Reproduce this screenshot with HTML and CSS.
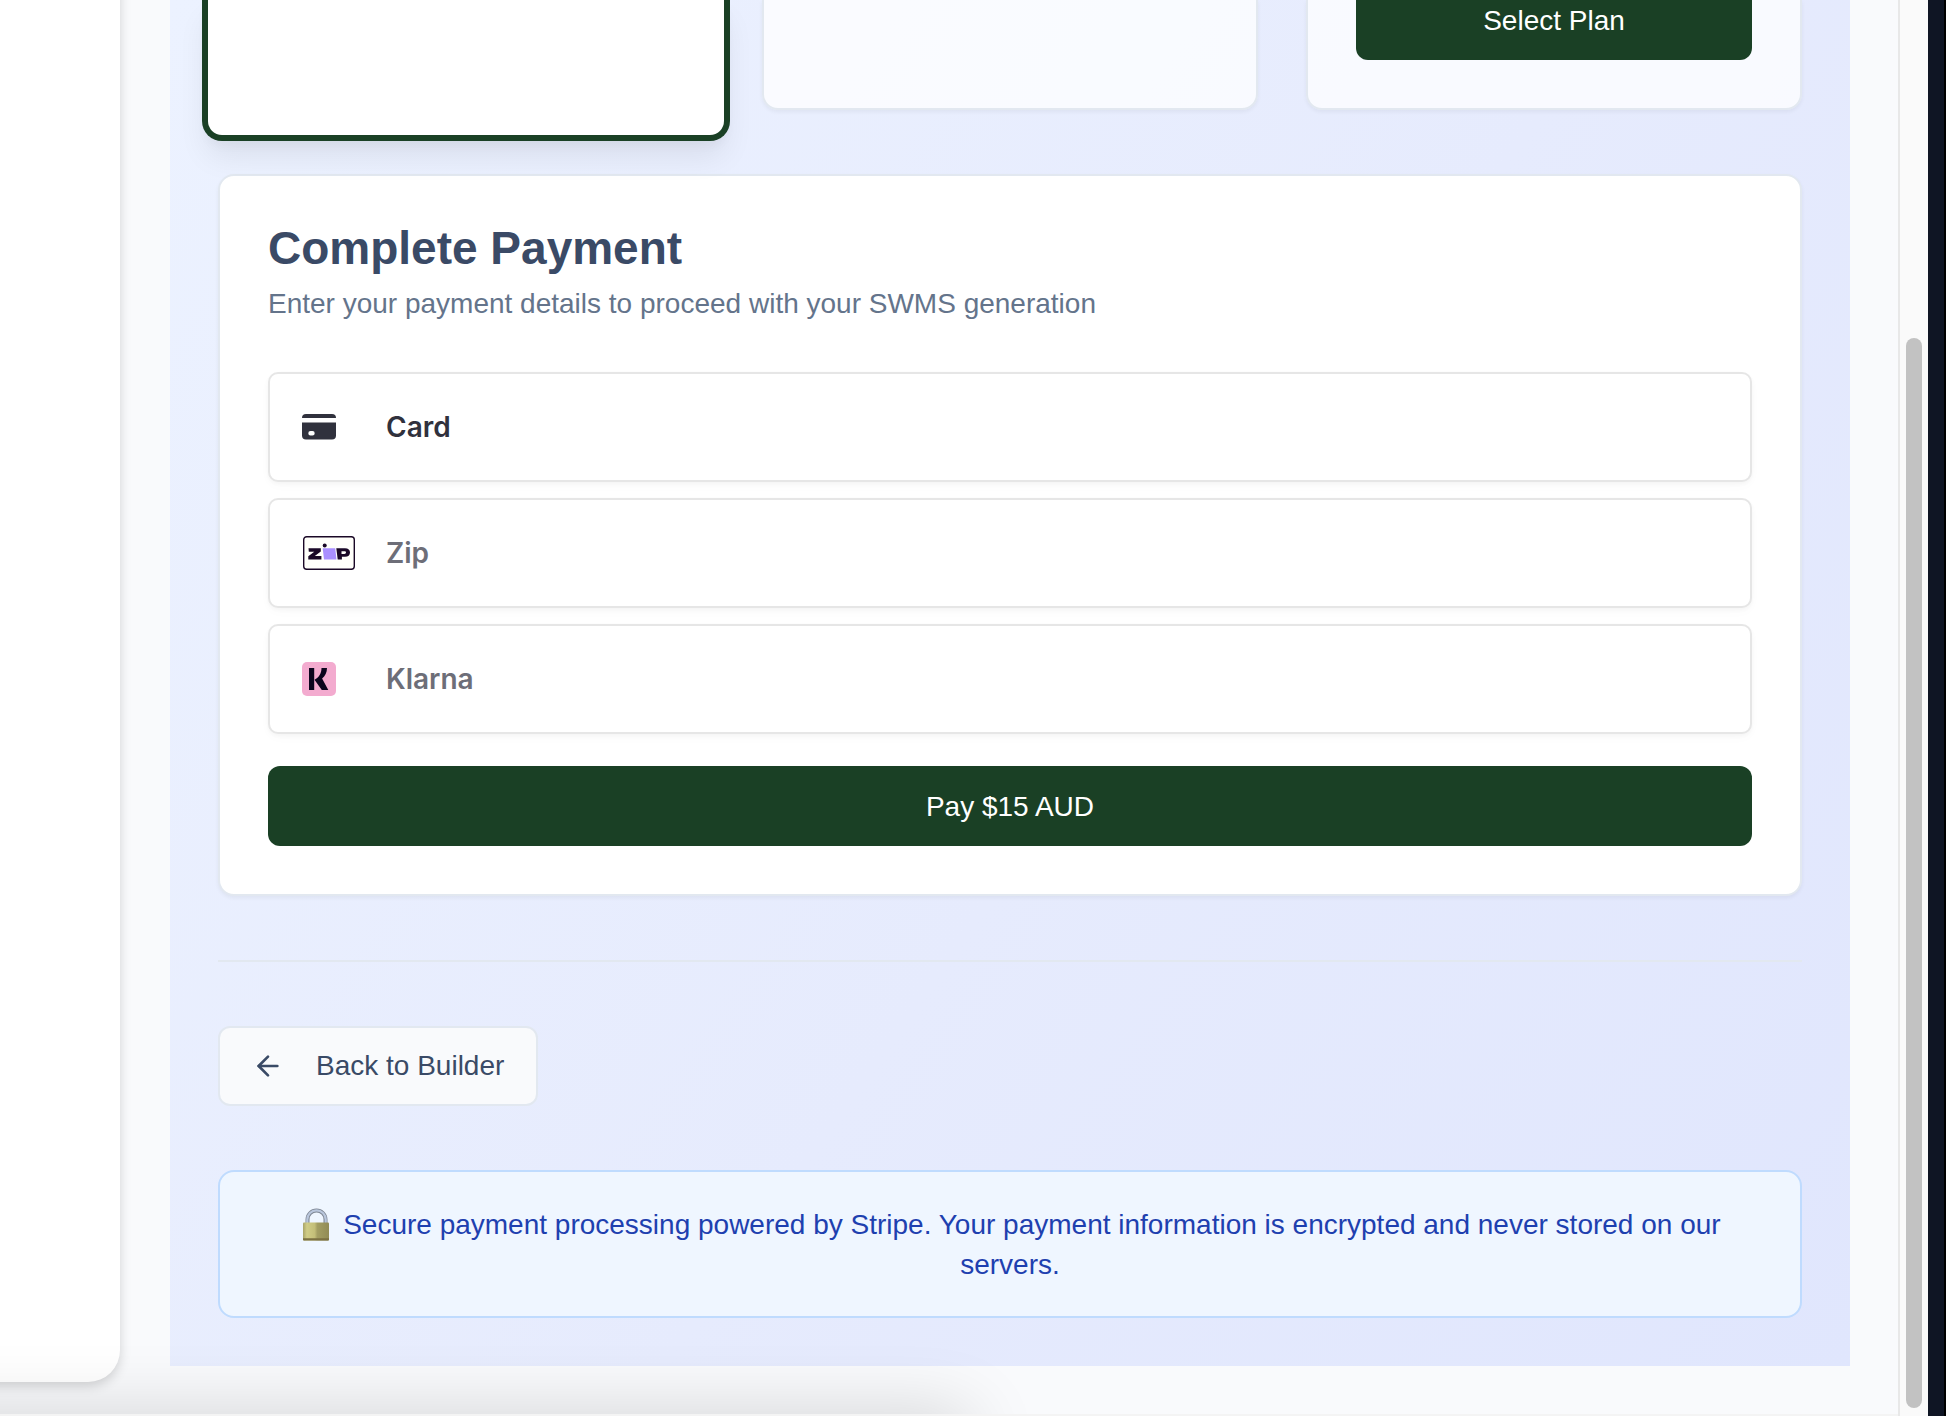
FILE: index.html
```html
<!DOCTYPE html>
<html lang="en">
<head>
<meta charset="utf-8">
<title>Complete Payment</title>
<meta name="viewport" content="width=device-width, initial-scale=1">
<link rel="stylesheet" href="styles.css">
</head>
<body>
<div class="page">
  <div class="content">
    <aside class="side-card"></aside>
    <main class="panel">
      <section class="plans">
        <article class="plan plan-selected"></article>
        <article class="plan"></article>
        <article class="plan"><button class="btn btn-plan" type="button">Select Plan</button></article>
      </section>

      <section class="payment">
        <h2 class="payment-title">Complete Payment</h2>
        <p class="payment-text">Enter your payment details to proceed with your SWMS generation</p>
        <div class="methods">
          <button class="method method-active" type="button">
            <span class="method-icon">
              <svg width="34" height="26" viewBox="0 0 34 26" fill="#30313d" aria-hidden="true">
                <path d="M4 0h26a4 4 0 0 1 4 4H0a4 4 0 0 1 4-4z"/>
                <path fill-rule="evenodd" d="M0 8.500h34V21.500a4 4 0 0 1-4 4H4a4 4 0 0 1-4-4zM8.500 17a2.200 2.200 0 0 0 0 4.400h2a2.200 2.200 0 0 0 0-4.400z"/>
              </svg>
            </span>
            <span>Card</span>
          </button>
          <button class="method" type="button">
            <span class="method-icon">
              <svg width="54" height="34" viewBox="0 0 54 34" aria-hidden="true">
                <rect x="1.700" y=".7" width="50.600" height="32.600" rx="3" fill="#fffffa" stroke="#1a0826" stroke-width="1.400"/>
                <path fill="#aa8fff" d="M20.700 12.300h12.500l1.300 11.200H22z"/>
                <circle cx="22.700" cy="9.400" r="2" fill="#1a0826"/>
                <path fill="#1a0826" d="M6.500 12.300h12.300v3.200l-6 4.600h6.600v3.400H6.300v-3.300l6-4.500H6.800z"/>
                <path fill="#1a0826" fill-rule="evenodd" d="M34.300 12.300h8.700c3.300 0 5 1.600 5 4.200 0 2.700-1.800 4.300-5 4.300h-3.100v2.700h-4.200zM39.500 15.200v2.700h2.900c1 0 1.600-.5 1.600-1.400 0-.8-.6-1.300-1.600-1.300z"/>
              </svg>
            </span>
            <span>Zip</span>
          </button>
          <button class="method" type="button">
            <span class="method-icon">
              <svg width="34" height="34" viewBox="0 0 34 34" aria-hidden="true">
                <rect width="34" height="34" rx="5" fill="#f3abcf"/>
                <rect x="7" y="6" width="5.200" height="22" fill="#0b051d"/>
                <path fill="#0b051d" d="M19.500 6H25c0 4.500-1.900 8-4.900 10.500L26.300 28h-6.500l-7.300-10.200C17 15.500 19.500 11.200 19.500 6z"/>
              </svg>
            </span>
            <span>Klarna</span>
          </button>
        </div>
        <button class="btn" type="button">Pay $15 AUD</button>
      </section>

      <div class="actions">
        <button class="back" type="button">
          <svg width="32" height="32" viewBox="0 0 24 24" fill="none" stroke="currentColor" stroke-width="2" stroke-linecap="round" stroke-linejoin="round" aria-hidden="true"><path d="m12 19-7-7 7-7"/><path d="M19 12H5"/></svg>
          <span>Back to Builder</span>
        </button>
      </div>

      <p class="notice"><svg class="lock" width="36" height="34" viewBox="0 0 36 34" aria-hidden="true">
          <defs>
            <linearGradient id="brass" x1="0" x2="1" y1="0" y2="0">
              <stop offset="0" stop-color="#a9a468"/><stop offset=".15" stop-color="#d0cc86"/><stop offset=".45" stop-color="#c3be78"/><stop offset=".55" stop-color="#a39e62"/><stop offset="1" stop-color="#918b55"/>
            </linearGradient>
          </defs>
          <path d="M8.500 16v-4.500a9 9 0 0 1 18 0V16" fill="none" stroke="#7f8794" stroke-width="4"/>
          <path d="M8.300 16v-4.500a9.200 9.200 0 0 1 18.400 0V16" fill="none" stroke="#b9c6dc" stroke-width="2.200"/>
          <rect x="4" y="14.500" width="26" height="18" rx="1" fill="url(#brass)"/>
          <path d="M4 30.300h26v1.200a1 1 0 0 1-1 1H5a1 1 0 0 1-1-1z" fill="#7b7142"/>
        </svg> Secure payment processing powered by Stripe. Your payment information is encrypted and never stored on our servers.</p>
    </main>
    <div class="bottom-shade"></div>
  </div>
  <div class="scroll-track"><div class="scroll-thumb"></div></div>
  <div class="window-edge"></div>
</div>
</body>
</html>
```
FILE: styles.css
```css
* { box-sizing: border-box; }

body {
  margin: 0;
  background: #f9fafc;
  font-family: "Liberation Sans", Arial, Helvetica, sans-serif;
  font-size: 28px;
  line-height: 40px;
  color: #3a4a66;
}

button { font: inherit; cursor: pointer; }
h2, p { margin: 0; }

.page {
  display: flex;
  min-height: 100vh;
  overflow: hidden;
}

.content {
  position: relative;
  flex: 1;
  display: flex;
  gap: 50px;
  padding-right: 48px;
  overflow: hidden;
  border-bottom: 2px solid #f4f4f4;
}

/* The card runs off the top and left edges of the view. */
.side-card {
  flex: 0 0 160px;
  margin: -40px 0 32px -40px;
  background: #fff;
  border-bottom-right-radius: 32px;
  box-shadow: 0 4px 12px rgba(0, 0, 0, 0.16);
}

.panel {
  flex: 1;
  min-width: 0;
  margin-bottom: 48px;
  padding: 0 48px 48px;
  background: linear-gradient(125deg, #ecf2ff, #e6ebfd 55%, #e0e6fd);
}

.plans {
  display: grid;
  grid-template-columns: repeat(3, 1fr);
  gap: 48px;
  margin-bottom: 64px;
}

.plan {
  padding: 0 48px 48px;
  background: rgba(255, 255, 255, 0.75);
  border: 2px solid #e2e8f0;
  border-top: 0;
  border-radius: 0 0 16px 16px;
  box-shadow: 0 2px 4px rgba(0, 0, 0, 0.05);
}

/* The chosen plan is larger than its neighbours and ringed. */
.plan-selected {
  margin: 0 -12px -27px;
  background: #fff;
  border-color: #1a4025;
  box-shadow: 0 0 0 4px #1a4025, 0 20px 30px rgba(0, 0, 0, 0.07), 0 8px 12px rgba(0, 0, 0, 0.04);
}

.btn {
  display: block;
  width: 100%;
  height: 80px;
  padding: 2px 32px 0;
  color: #fff;
  background: #1a4025;
  border: 0;
  border-radius: 12px;
}

.btn-plan { margin-top: -20px; }

.payment {
  padding: 48px;
  background: #fff;
  border: 2px solid #e2e8f0;
  border-radius: 16px;
  box-shadow: 0 2px 4px rgba(0, 0, 0, 0.05);
}

.payment-title {
  margin-bottom: 12px;
  font-size: 46px;
  line-height: 48px;
}

.payment-text { color: #64748b; }

.methods {
  display: grid;
  gap: 16px;
  margin: 48px 0 32px;
}

.method {
  display: flex;
  align-items: center;
  height: 110px;
  padding: 0 32px;
  font-family: Inter, sans-serif;
  font-weight: 600;
  color: #6d6e78;
  background: #fff;
  border: 2px solid #e6e6e6;
  border-radius: 10px;
  box-shadow: 0 2px 4px rgba(0, 0, 0, 0.03), 0 4px 12px rgba(0, 0, 0, 0.02);
}

.method-active { color: #30313d; }

.method-icon {
  display: flex;
  width: 84px;
}

.actions {
  margin: 64px 0;
  padding-top: 64px;
  border-top: 2px solid #e2e8f0;
}

.back {
  display: flex;
  align-items: center;
  gap: 32px;
  height: 80px;
  padding: 0 32px;
  color: #3a4a66;
  background: #f9fafc;
  border: 2px solid #e2e8f0;
  border-radius: 12px;
}

.notice {
  padding: 33px 32px 31px;
  text-align: center;
  color: #1e40af;
  background: #eff6ff;
  border: 2px solid #bfdbfe;
  border-radius: 16px;
}

.lock { vertical-align: -8px; }

.bottom-shade {
  position: absolute;
  left: -100px;
  right: 49%;
  bottom: -60px;
  height: 60px;
  box-shadow: 0 0 70px rgba(0, 0, 0, 0.17);
}

.scroll-track {
  display: flex;
  flex: 0 0 30px;
  padding: 338px 6px 8px;
  background: #fafafa;
  border-left: 2px solid #e8e8e8;
}

.scroll-thumb {
  flex: 0 0 16px;
  background: #c2c2c2;
  border-radius: 8px;
}

.window-edge {
  flex: 0 0 18px;
  background: #0f1524;
  border-right: 2px solid #000;
}
```
